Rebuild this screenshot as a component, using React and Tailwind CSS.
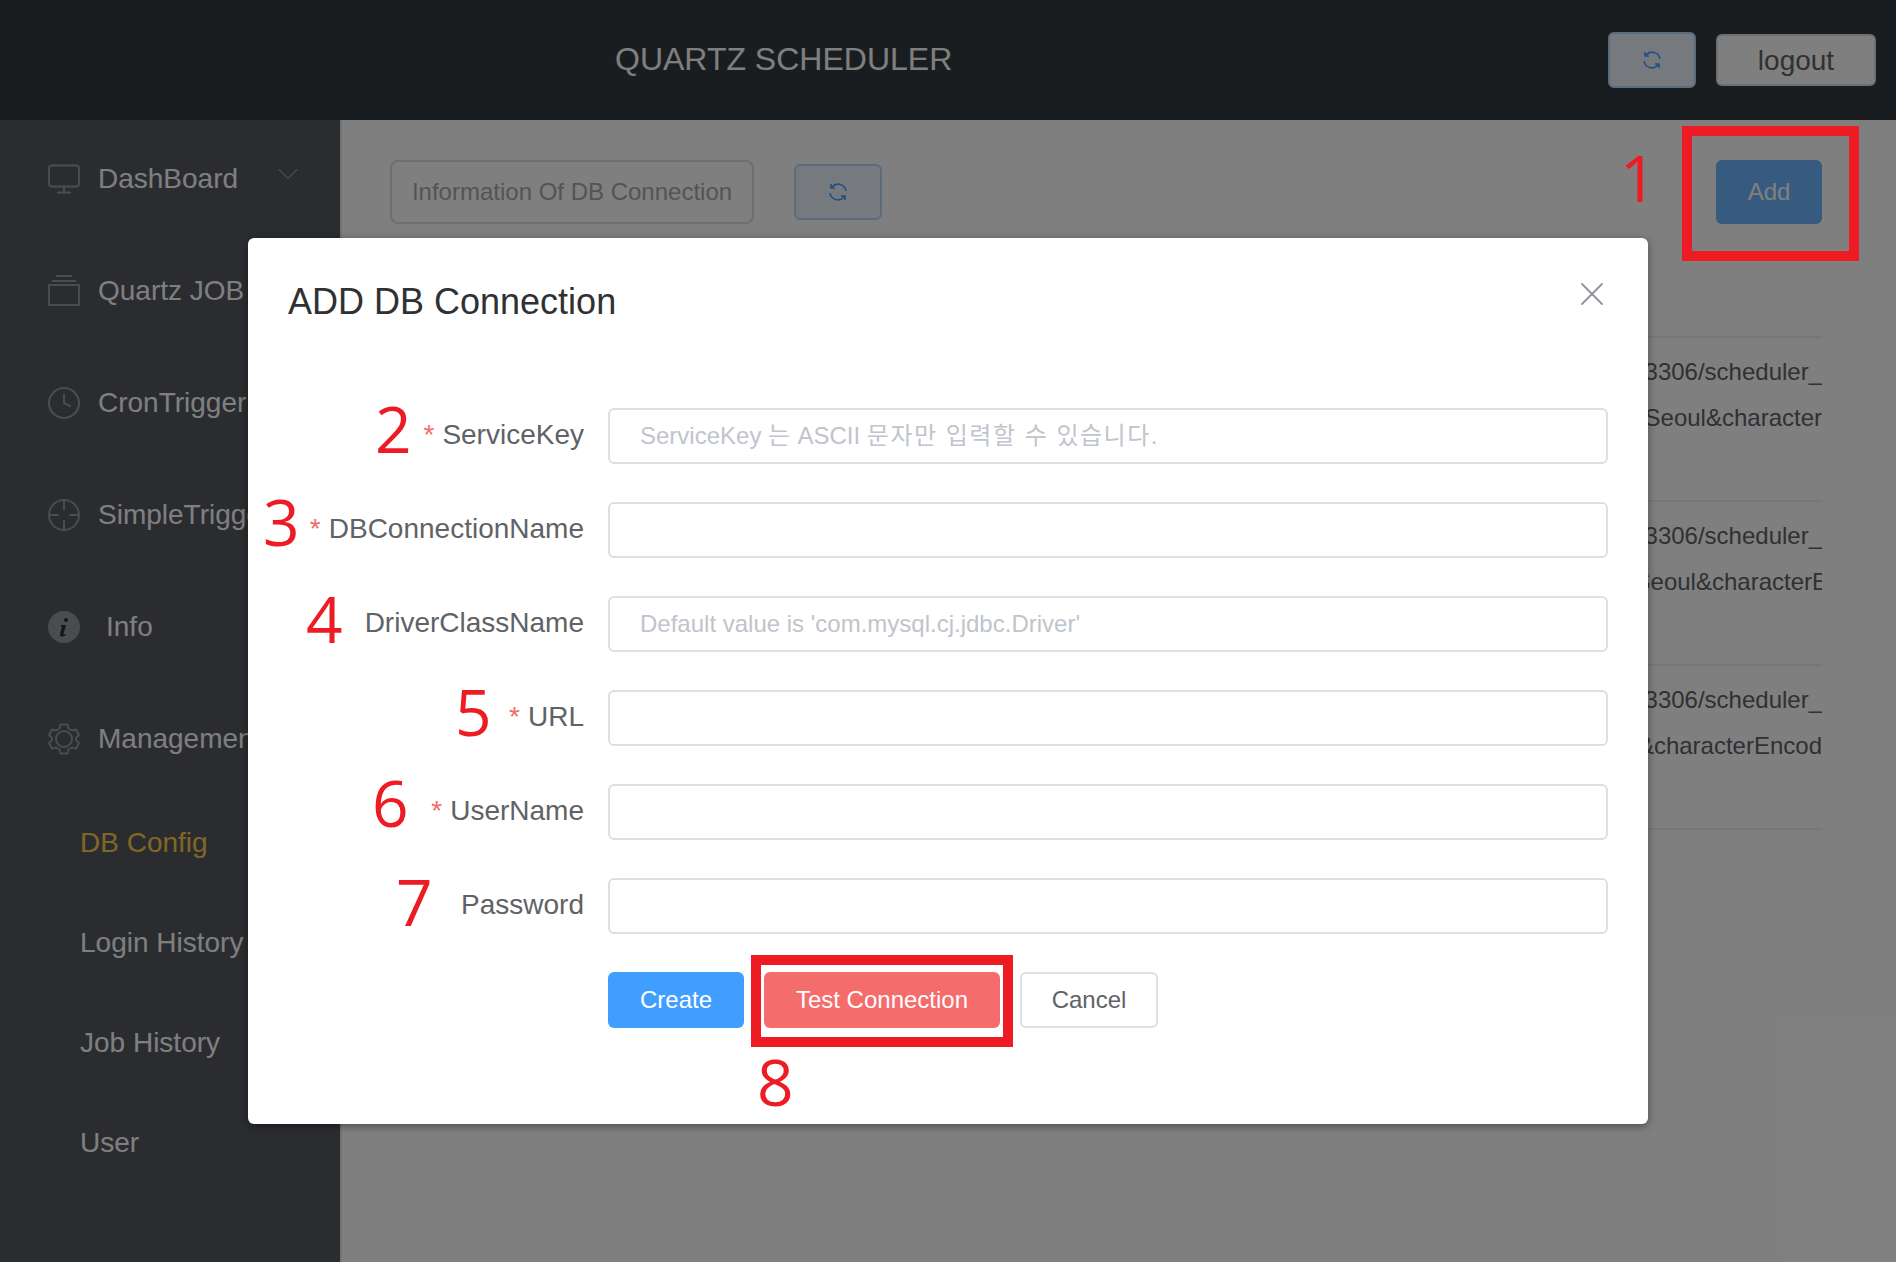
import React from 'react';
import { Monitor, Clock, X, ChevronDown } from 'lucide-react';

const font = { fontFamily: '"Liberation Sans", "Noto Sans CJK KR", sans-serif' };

function RefreshIcon() {
  return (
    <svg width="20" height="20" viewBox="0 0 20 20" fill="none" stroke="currentColor" strokeWidth="1.6">
      <path d="M18 9A8 8 0 0 0 4 5M3 2v4h4" />
      <path d="M2 11a8 8 0 0 0 14 4M17 18v-4h-4" />
    </svg>
  );
}

function JobIcon() {
  return (
    <svg width="32" height="32" viewBox="0 0 32 32" fill="none" stroke="currentColor" strokeWidth="2">
      <rect x="1" y="10" width="30" height="20" />
      <path d="M8 1h16M4 6h24" />
    </svg>
  );
}

function TargetIcon() {
  return (
    <svg width="32" height="32" viewBox="0 0 32 32" fill="none" stroke="currentColor" strokeWidth="2">
      <circle cx="16" cy="16" r="15" />
      <path d="M16 1v10M16 21v10M1 16h10M21 16h10" />
    </svg>
  );
}

function InfoIcon() {
  return (
    <svg width="32" height="32" viewBox="0 0 32 32">
      <circle cx="16" cy="16" r="16" fill="currentColor" />
      <circle cx="18" cy="9" r="2" fill="#2a2c31" />
      <path d="M13 14h5l-2.5 9c-.2.8.6 1 2.5 0l-.4 1.6c-3.6 1.8-6.2 1-5.6-1.4l1.9-7.4H13z" fill="#2a2c31" />
    </svg>
  );
}

function GearIcon() {
  return (
    <svg width="32" height="32" viewBox="0 0 32 32" fill="none" stroke="currentColor" strokeWidth="2" strokeLinejoin="round">
      <path d="M12.5 1.5h7l1 4 3.5 2 4-1 3 5.500-3 3v2l3 3-3 5.500-4-1-3.500 2-1 4h-7l-1-4-3.500-2-4 1-3-5.500 3-3v-2l-3-3 3-5.500 4 1 3.500-2z" />
      <circle cx="16" cy="16" r="8" />
    </svg>
  );
}

function MenuItem({ icon, label, chevron, textClass = 'ml-[18px]' }) {
  return (
    <div className="h-[112px] pl-12 flex items-center relative whitespace-nowrap">
      <span className="w-8 h-8 flex items-center justify-center text-[#96999f]">{icon}</span>
      <span className={textClass}>{label}</span>
      {chevron && <ChevronDown className="absolute left-[270px] top-[33px] text-[#96999f]" size={36} strokeWidth={0.8} />}
    </div>
  );
}

function SubItem({ label, active }) {
  return (
    <div className={`h-[100px] pl-20 flex items-center whitespace-nowrap ${active ? 'text-[#ffd04b]' : ''}`}>{label}</div>
  );
}

function Row({ first, second, clip }) {
  return (
    <div className="h-[164px] border-t-2 border-[#ebeef5] pt-[11px] text-2xl leading-[45.5px] text-[#606266]">
      <div className="flex justify-end overflow-hidden whitespace-nowrap">{first}</div>
      <div className="flex justify-end overflow-hidden whitespace-nowrap">
        <span className={clip}>{second}</span>
      </div>
    </div>
  );
}

function Field({ label, required, placeholder, hint }) {
  return (
    <div className="flex items-center mb-[38px]">
      <label className="w-[360px] pr-6 pb-[2px] text-right text-[28px] text-[#606266] whitespace-nowrap">
        {required && <span className="text-[#f56c6c] mr-2">*</span>}
        {label}
      </label>
      <div className="relative">
        <input
          placeholder={placeholder}
          className="block w-[1000px] h-14 border-2 border-[#dcdfe6] rounded-md px-[30px] text-2xl text-[#606266] bg-white placeholder:text-[#c0c4cc] outline-none"
        />
        {hint && (
          <span className="absolute left-8 top-0 h-14 flex items-center text-2xl text-[#c0c4cc] whitespace-pre pointer-events-none">{hint}</span>
        )}
      </div>
    </div>
  );
}

// red annotation numbers sit on top of the screenshot
function Mark({ children, className }) {
  return (
    <span className={`absolute z-30 text-[#ed1c24] text-[64px] leading-none ${className}`} style={{ fontFamily: '"Open Sans", sans-serif' }}>
      {children}
    </span>
  );
}

export default function App() {
  return (
    <div className="relative w-full h-[1262px] overflow-hidden bg-white flex flex-col" style={font}>
      <header className="h-[120px] bg-[#343a40] relative flex items-center shrink-0">
        <div className="ml-[615px] pb-[2px] text-[32px] text-white">QUARTZ SCHEDULER</div>
        <div className="ml-auto mr-5 flex items-center gap-5">
          <button className="w-[88px] h-14 rounded-md bg-[#ecf5ff] border-2 border-[#b3d8ff] text-[#409eff] flex items-center justify-center">
            <RefreshIcon />
          </button>
          <button className="w-40 h-[52px] pt-[2px] rounded-md bg-white border-2 border-[#dcdfe6] text-[28px] text-[#606266]">logout</button>
        </div>
      </header>

      <div className="flex flex-1">
        <aside className="w-[340px] bg-[#545960] text-[28px] text-white pt-[3px] shrink-0">
          <MenuItem icon={<Monitor className="shrink-0" size={36} strokeWidth={1.4} />} label="DashBoard" chevron />
          <MenuItem icon={<JobIcon />} label="Quartz JOB" />
          <MenuItem icon={<Clock className="shrink-0" size={36} strokeWidth={1.4} />} label="CronTrigger" />
          <MenuItem icon={<TargetIcon />} label="SimpleTrigger" />
          <MenuItem icon={<InfoIcon />} label="Info" textClass="ml-[26px]" />
          <MenuItem icon={<GearIcon />} label="Management" />
          <div className="-mt-[2px]">
            <SubItem label="DB Config" active />
            <SubItem label="Login History" />
            <SubItem label="Job History" />
            <SubItem label="User" />
          </div>
        </aside>

        <main className="flex-1 border-l-2 border-[#e6e6e6] pl-[48px] pr-[74px] pt-10 min-w-0">
          <div className="flex items-center h-[64px]">
            <button className="w-[364px] h-16 rounded-lg border-2 border-[#dcdfe6] bg-white text-2xl text-[#a8a8a8]">Information Of DB Connection</button>
            <button className="ml-10 w-[88px] h-14 rounded-md bg-[#ecf5ff] border-2 border-[#b3d8ff] text-[#409eff] flex items-center justify-center">
              <RefreshIcon />
            </button>
            <button className="ml-auto w-[106px] h-16 rounded-md bg-[#6cb6ff] text-2xl text-white">Add</button>
          </div>
          <div className="mt-[112px] min-w-0 overflow-hidden">
            <Row first="jdbc:mysql://localhost:3306/scheduler_" second="serverTimezone=Asia/Seoul&character" />
            <Row first="jdbc:mysql://localhost:3306/scheduler_" second="serverTimezone=Asia/Seoul&characterE" clip="-mr-[6px]" />
            <Row first="jdbc:mysql://localhost:3306/scheduler_" second="useUnicode=true&characterEncod" />
            <div className="border-t-2 border-[#ebeef5]" />
          </div>
        </main>
      </div>

      {/* dialog overlay */}
      <div className="absolute inset-0 bg-black/50 z-10" />
      <div className="absolute z-20 left-[248px] top-[238px] w-[1400px] h-[886px] bg-white rounded-md shadow-[0_2px_8px_rgba(0,0,0,0.4)]">
        <h2 className="pl-10 pt-[42px] text-[36px] leading-[44px] text-[#303133]">ADD DB Connection</h2>
        <X className="absolute left-[1324px] top-[36px] text-[#909399]" size={40} strokeWidth={1.1} />
        <form className="mt-[84px]">
          <Field
            label="ServiceKey"
            required
            hint={
              <>
                ServiceKey <span className="tracking-[2px]">는</span> ASCII <span className="tracking-[1.5px]">문자만 입력할 수 있습니다.</span>
              </>
            }
          />
          <Field label="DBConnectionName" required />
          <Field label="DriverClassName" placeholder="Default value is 'com.mysql.cj.jdbc.Driver'" />
          <Field label="URL" required />
          <Field label="UserName" required />
          <Field label="Password" />
          <div className="pl-[360px] flex gap-5 text-2xl">
            <button type="button" className="w-[136px] h-14 rounded-md bg-[#409eff] text-white">Create</button>
            <button type="button" className="w-[236px] h-14 rounded-md bg-[#f56c6c] text-white">Test Connection</button>
            <button type="button" className="w-[138px] h-14 rounded-md border-2 border-[#dcdfe6] text-[#606266]">Cancel</button>
          </div>
        </form>
      </div>

      {/* annotations */}
      <div className="absolute z-30 left-[1682px] top-[126px] w-[177px] h-[135px] border-[10px] border-[#ed1c24]" />
      <div className="absolute z-30 left-[751px] top-[955px] w-[262px] h-[92px] border-[10px] border-[#ed1c24]" />
      <Mark className="left-[1620px] top-[146px]">1</Mark>
      <Mark className="left-[375px] top-[397px]">2</Mark>
      <Mark className="left-[263px] top-[490px]">3</Mark>
      <Mark className="left-[306px] top-[587px]">4</Mark>
      <Mark className="left-[455px] top-[680px]">5</Mark>
      <Mark className="left-[372px] top-[771px]">6</Mark>
      <Mark className="left-[396px] top-[870px]">7</Mark>
      <Mark className="left-[757px] top-[1050px]">8</Mark>
    </div>
  );
}
